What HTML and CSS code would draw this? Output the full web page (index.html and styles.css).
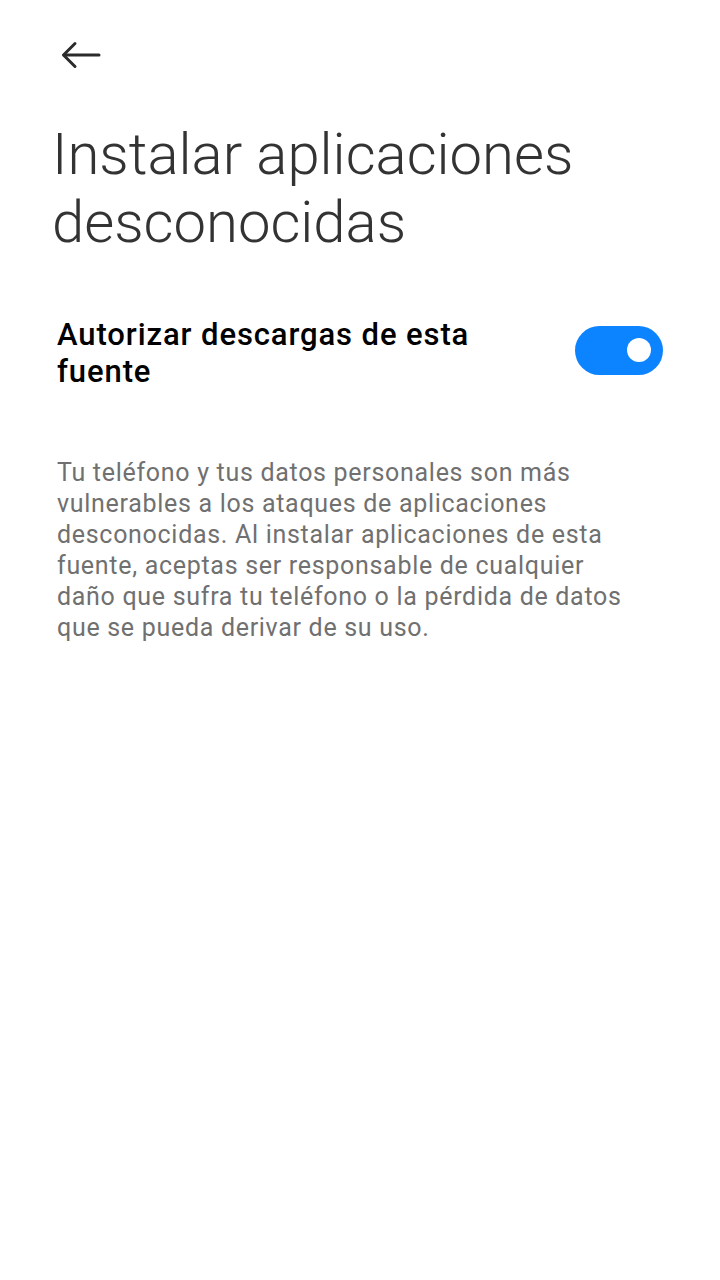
FILE: index.html
```html
<!DOCTYPE html>
<html lang="es">
<head>
    <meta charset="UTF-8">
    <meta name="viewport" content="width=device-width, initial-scale=1.0">
    <title>Instalar aplicaciones desconocidas</title>
    <link rel="stylesheet" href="styles.css">
</head>
<body>
    <div class="screen">
        <div class="top-bar">
            <a href="#" class="back-btn" aria-label="Atrás">
                <svg width="40" height="28" viewBox="0 0 40 28" fill="none" stroke="#2b2b2b" stroke-width="3" stroke-linecap="round" stroke-linejoin="round">
                    <path d="M38 14H3"/>
                    <path d="M14 2.5L2.5 14L14 25.5"/>
                </svg>
            </a>
        </div>

        <h1 class="page-title">Instalar aplicaciones desconocidas</h1>

        <div class="setting-row">
            <div class="setting-label">Autorizar descargas de esta fuente</div>
            <label class="switch">
                <input type="checkbox" checked>
                <span class="slider"></span>
            </label>
        </div>

        <p class="description">
            Tu teléfono y tus datos personales son más vulnerables a los ataques de aplicaciones desconocidas. Al instalar aplicaciones de esta fuente, aceptas ser responsable de cualquier daño que sufra tu teléfono o la pérdida de datos que se pueda derivar de su uso.
        </p>
    </div>
</body>
</html>
```

FILE: styles.css
```css
* {
    margin: 0;
    padding: 0;
    box-sizing: border-box;
}

body {
    font-family: Roboto, 'Noto Sans', sans-serif;
    background: #fff;
    min-height: 100vh;
}

.screen {
    width: 720px;
    min-height: 1280px;
    background: #fff;
}

.top-bar {
    height: 110px;
    display: flex;
    align-items: center;
    padding-left: 61px;
}

.back-btn {
    display: flex;
    width: 40px;
    height: 28px;
}

.page-title {
    font-weight: 300;
    font-size: 58px;
    line-height: 68px;
    color: #333;
    padding: 10px 40px 0 52px;
}

.setting-row {
    display: flex;
    align-items: center;
    justify-content: space-between;
    padding: 60px 57px 0 57px;
}

.setting-label {
    font-weight: 500;
    font-size: 31px;
    line-height: 37px;
    letter-spacing: 0.9px;
    color: #000;
    max-width: 450px;
}

.switch {
    position: relative;
    display: inline-block;
    width: 88px;
    height: 49px;
    margin-top: -6px;
    flex-shrink: 0;
}

.switch input {
    opacity: 0;
    width: 0;
    height: 0;
}

.slider {
    position: absolute;
    inset: 0;
    background: #0d84ff;
    border-radius: 25px;
    cursor: pointer;
}

.slider::before {
    content: "";
    position: absolute;
    width: 24px;
    height: 24px;
    right: 12px;
    top: 12px;
    background: #fff;
    border-radius: 50%;
}

.description {
    font-size: 25px;
    line-height: 31px;
    letter-spacing: 0.7px;
    color: #707070;
    padding: 67px 92px 0 57px;
}
```
